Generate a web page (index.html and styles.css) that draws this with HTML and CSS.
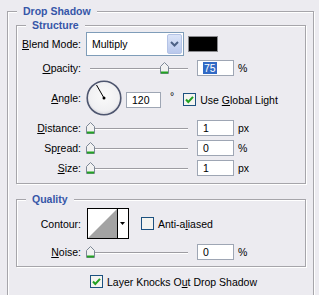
FILE: index.html
```html
<!DOCTYPE html>
<html lang="en">

<head>
    <meta charset="UTF-8">
    <title>Drop Shadow</title>
    <link rel="stylesheet" href="styles.css">
</head>

<body>
    <div class="dialog">
        <fieldset class="group outer">
            <legend>Drop Shadow</legend>

            <fieldset class="group inner">
                <legend>Structure</legend>

                <div class="row blend-row">
                    <span class="lbl"><u>B</u>lend Mode:</span>
                    <div class="select">
                        <span class="select-text">Multiply</span>
                        <span class="select-btn">
                            <svg width="15" height="20" viewBox="0 0 15 20">
                                <path d="M4 8 L7.5 11.5 L11 8" fill="none" stroke="#4d6185" stroke-width="2"/>
                            </svg>
                        </span>
                    </div>
                    <div class="swatch"></div>
                </div>

                <div class="row">
                    <span class="lbl"><u>O</u>pacity:</span>
                    <div class="slider">
                        <div class="track"></div>
                        <svg class="thumb" style="left: 74px" width="9" height="12" viewBox="0 0 9 12">
                            <path d="M0.5 4.5 L4.5 0.5 L8.5 4.5 L8.5 11.5 L0.5 11.5 Z" fill="#f1f1f1" stroke="#7c8796"/>
                            <rect x="1" y="9.5" width="7" height="2" fill="#22a322"/>
                        </svg>
                    </div>
                    <div class="field"><span class="selected">75</span></div>
                    <span class="unit">%</span>
                </div>

                <div class="row angle-row">
                    <span class="lbl"><u>A</u>ngle:</span>
                    <svg class="dial" width="36" height="36" viewBox="0 0 36 36">
                        <defs>
                            <radialGradient id="dialFill" cx="50%" cy="45%" r="55%">
                                <stop offset="0%" stop-color="#fafafa"/>
                                <stop offset="80%" stop-color="#f0f0f2"/>
                                <stop offset="100%" stop-color="#d6d6dc"/>
                            </radialGradient>
                        </defs>
                        <circle cx="18" cy="18" r="16.8" fill="url(#dialFill)" stroke="#4e566f" stroke-width="1.6"/>
                        <line x1="18" y1="18" x2="10.5" y2="5" stroke="#000" stroke-width="1"/>
                        <circle cx="18" cy="18" r="1.5" fill="#000"/>
                    </svg>
                    <div class="field angle-field">120</div>
                    <span class="degree">°</span>
                    <span class="check global">
                        <svg class="box" width="13" height="13" viewBox="0 0 13 13">
                            <rect x="0.5" y="0.5" width="12" height="12" fill="#f4f4f0" stroke="#1c5180"/>
                            <path d="M3 6.5 L5.3 9 L10 3.8" fill="none" stroke="#21a121" stroke-width="2"/>
                        </svg>
                        <span>Use <u>G</u>lobal Light</span>
                    </span>
                </div>

                <div class="row">
                    <span class="lbl"><u>D</u>istance:</span>
                    <div class="slider">
                        <div class="track"></div>
                        <svg class="thumb" style="left: 0px" width="9" height="12" viewBox="0 0 9 12">
                            <path d="M0.5 4.5 L4.5 0.5 L8.5 4.5 L8.5 11.5 L0.5 11.5 Z" fill="#f1f1f1" stroke="#7c8796"/>
                            <rect x="1" y="9.5" width="7" height="2" fill="#22a322"/>
                        </svg>
                    </div>
                    <div class="field">1</div>
                    <span class="unit">px</span>
                </div>

                <div class="row">
                    <span class="lbl">Sp<u>r</u>ead:</span>
                    <div class="slider">
                        <div class="track"></div>
                        <svg class="thumb" style="left: 0px" width="9" height="12" viewBox="0 0 9 12">
                            <path d="M0.5 4.5 L4.5 0.5 L8.5 4.5 L8.5 11.5 L0.5 11.5 Z" fill="#f1f1f1" stroke="#7c8796"/>
                            <rect x="1" y="9.5" width="7" height="2" fill="#22a322"/>
                        </svg>
                    </div>
                    <div class="field">0</div>
                    <span class="unit">%</span>
                </div>

                <div class="row">
                    <span class="lbl"><u>S</u>ize:</span>
                    <div class="slider">
                        <div class="track"></div>
                        <svg class="thumb" style="left: 0px" width="9" height="12" viewBox="0 0 9 12">
                            <path d="M0.5 4.5 L4.5 0.5 L8.5 4.5 L8.5 11.5 L0.5 11.5 Z" fill="#f1f1f1" stroke="#7c8796"/>
                            <rect x="1" y="9.5" width="7" height="2" fill="#22a322"/>
                        </svg>
                    </div>
                    <div class="field">1</div>
                    <span class="unit">px</span>
                </div>
            </fieldset>

            <fieldset class="group inner quality">
                <legend>Quality</legend>

                <div class="row contour-row">
                    <span class="lbl">Contour:</span>
                    <svg class="contour" width="42" height="31" viewBox="0 0 42 31">
                        <rect x="0.5" y="0.5" width="41" height="30" fill="#fff" stroke="#000"/>
                        <polygon points="1,30 30,1 30,30" fill="#a3a3a3"/>
                        <line x1="30.5" y1="1" x2="30.5" y2="30" stroke="#000"/>
                        <polygon points="33,14 38,14 35.5,17" fill="#000"/>
                    </svg>
                    <span class="check anti">
                        <svg class="box" width="13" height="13" viewBox="0 0 13 13">
                            <rect x="0.5" y="0.5" width="12" height="12" fill="#f4f4f0" stroke="#1c5180"/>
                        </svg>
                        <span>Anti-a<u>l</u>iased</span>
                    </span>
                </div>

                <div class="row noise-row">
                    <span class="lbl"><u>N</u>oise:</span>
                    <div class="slider">
                        <div class="track"></div>
                        <svg class="thumb" style="left: 0px" width="9" height="12" viewBox="0 0 9 12">
                            <path d="M0.5 4.5 L4.5 0.5 L8.5 4.5 L8.5 11.5 L0.5 11.5 Z" fill="#f1f1f1" stroke="#7c8796"/>
                            <rect x="1" y="9.5" width="7" height="2" fill="#22a322"/>
                        </svg>
                    </div>
                    <div class="field">0</div>
                    <span class="unit">%</span>
                </div>
            </fieldset>

            <div class="knockout">
                <span class="check">
                    <svg class="box" width="13" height="13" viewBox="0 0 13 13">
                        <rect x="0.5" y="0.5" width="12" height="12" fill="#f4f4f0" stroke="#1c5180"/>
                        <path d="M3 6.5 L5.3 9 L10 3.8" fill="none" stroke="#21a121" stroke-width="2"/>
                    </svg>
                    <span>Layer Knocks O<u>u</u>t Drop Shadow</span>
                </span>
            </div>
        </fieldset>
    </div>
</body>

</html>
```

FILE: styles.css
```css
body {
    margin: 0;
    background: #ecebf0;
    font-family: 'Liberation Sans', Arial, sans-serif;
    font-size: 10.5px;
    color: #000;
    overflow: hidden;
}

.dialog {
    height: 295px;
    box-sizing: border-box;
    overflow: hidden;
    padding: 4px 5px 0 7px;
}

.group {
    margin: 0;
    padding: 0 0 7px 0;
    min-width: 0;
    border: 1px solid #a6a5aa;
    box-shadow: inset 1px 1px 0 #fff, 1px 1px 0 #fff;
}

.group legend {
    color: #3656a8;
    font-weight: bold;
    line-height: 14px;
    padding: 0 6px;
    background: #ecebf0;
}

.outer {
    padding: 0 7px 40px 8px;
}

.outer > legend {
    margin-left: 1px;
}

.inner > legend {
    margin-left: 9px;
}

.quality {
    margin-top: 8px;
    padding-bottom: 6px;
}

.row {
    display: flex;
    align-items: center;
    height: 16px;
    margin-top: 4px;
    white-space: nowrap;
}

.lbl {
    flex: none;
    width: 64px;
    margin-right: 5px;
    text-align: right;
}

/* blend mode */
.blend-row {
    height: 24px;
    margin-top: 0;
}

.select {
    display: flex;
    align-items: center;
    width: 98px;
    height: 24px;
    box-sizing: border-box;
    border: 1px solid #7f9db9;
    background: #fff;
    padding: 0 1px 0 5px;
}

.select-text {
    flex: 1;
}

.select-btn {
    display: flex;
    width: 15px;
    height: 20px;
    box-sizing: border-box;
    border: 1px solid #b4c3e6;
    border-radius: 2px;
    background: linear-gradient(#dbe4f8, #b9c8ec);
}

.select-btn svg {
    margin: -1px;
}

.swatch {
    width: 30px;
    height: 16px;
    box-sizing: border-box;
    margin-left: 4px;
    background: #000;
    border: 1px solid #8a8a8e;
}

/* sliders */
.slider {
    position: relative;
    flex: none;
    display: flex;
    align-items: center;
    width: 106px;
    height: 16px;
    margin-right: 5px;
}

.track {
    flex: 1;
    margin: 1px 4px 0 4px;
    border-top: 1px solid #9d9ca2;
    border-bottom: 1px solid #fff;
}

.thumb {
    position: absolute;
    top: 2px;
}

.field {
    width: 37px;
    height: 16px;
    box-sizing: border-box;
    border: 1px solid #9ea6b4;
    background: #fff;
    padding-left: 5px;
    line-height: 14px;
}

.selected {
    background: #316ac5;
    color: #fff;
    padding: 0 1px;
}

.unit {
    margin-left: 4px;
}

/* angle */
.angle-row {
    height: 36px;
}

.dial {
    margin-right: 4px;
}

.angle-field {
    width: 35px;
    margin-top: 3px;
}

.degree {
    margin-left: 9px;
    align-self: flex-start;
    margin-top: 10px;
}

.check {
    display: flex;
    align-items: center;
    gap: 4px;
}

.global {
    margin-left: 9px;
    margin-top: 3px;
}

/* quality */
.contour-row {
    height: 31px;
    margin-top: 2px;
}

.contour {
    margin-left: 1px;
}

.anti {
    margin-left: 12px;
}

.noise-row {
    margin-top: 5px;
}

.knockout {
    margin-top: 8px;
    padding-left: 74px;
}
```
